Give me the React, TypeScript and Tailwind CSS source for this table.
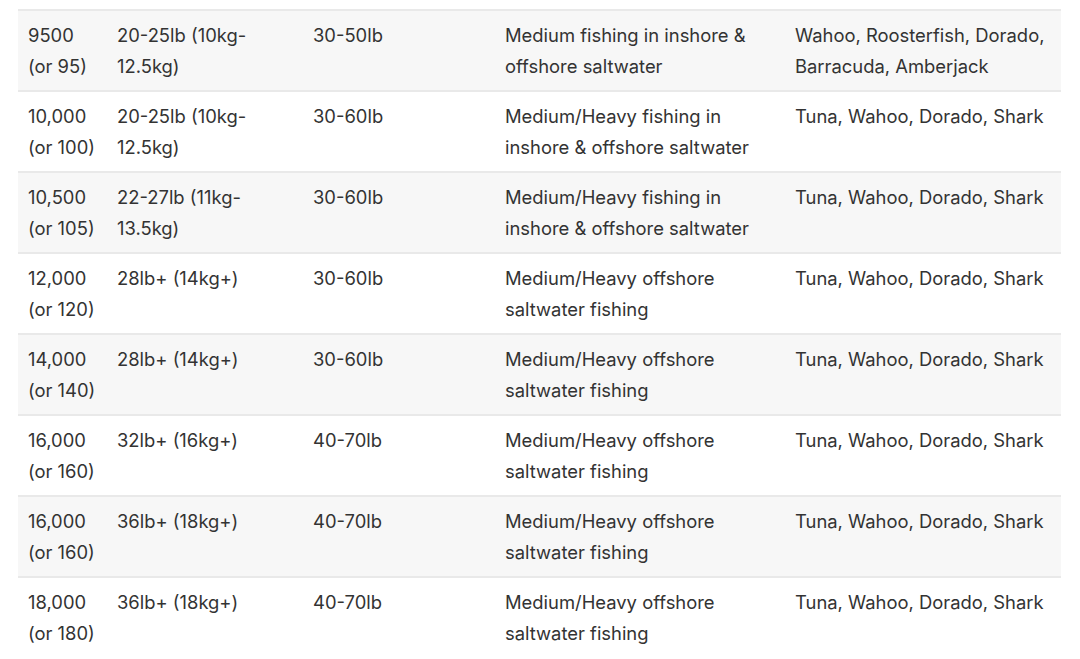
import React from 'react';

type Row = [string, string, string, string, string];

const rows: Row[] = [
  ['9500 (or 95)', '20-25lb (10kg-12.5kg)', '30-50lb', 'Medium fishing in inshore & offshore saltwater', 'Wahoo, Roosterfish, Dorado, Barracuda, Amberjack'],
  ['10,000 (or 100)', '20-25lb (10kg-12.5kg)', '30-60lb', 'Medium/Heavy fishing in inshore & offshore saltwater', 'Tuna, Wahoo, Dorado, Shark'],
  ['10,500 (or 105)', '22-27lb (11kg-13.5kg)', '30-60lb', 'Medium/Heavy fishing in inshore & offshore saltwater', 'Tuna, Wahoo, Dorado, Shark'],
  ['12,000 (or 120)', '28lb+ (14kg+)', '30-60lb', 'Medium/Heavy offshore saltwater fishing', 'Tuna, Wahoo, Dorado, Shark'],
  ['14,000 (or 140)', '28lb+ (14kg+)', '30-60lb', 'Medium/Heavy offshore saltwater fishing', 'Tuna, Wahoo, Dorado, Shark'],
  ['16,000 (or 160)', '32lb+ (16kg+)', '40-70lb', 'Medium/Heavy offshore saltwater fishing', 'Tuna, Wahoo, Dorado, Shark'],
  ['16,000 (or 160)', '36lb+ (18kg+)', '40-70lb', 'Medium/Heavy offshore saltwater fishing', 'Tuna, Wahoo, Dorado, Shark'],
  ['18,000 (or 180)', '36lb+ (18kg+)', '40-70lb', 'Medium/Heavy offshore saltwater fishing', 'Tuna, Wahoo, Dorado, Shark'],
];

const widths = ['w-[89px]', 'w-[196px]', 'w-[192px]', 'w-[290px]', 'w-[276px]'];

export default function App() {
  return (
    <div className="w-[1080px] h-[659px] overflow-hidden bg-white pt-[9px] pl-[18px]" style={{ fontFamily: 'Inter, "Noto Sans", sans-serif' }}>
      <table className="w-[1043px] table-fixed border-collapse text-[18.4px] leading-[31px] text-[#333333]">
        <tbody>
          {rows.map((r, i) => (
            <tr key={i} className={`border-t-2 border-[#e9e9e9] ${i % 2 === 0 ? 'bg-[#f7f7f7]' : 'bg-white'}`}>
              {r.map((c, j) => (
                <td key={j} className={`${widths[j]} align-top pl-[10px] pr-[4px] pt-[9px] pb-[8px]`}>
                  {c}
                </td>
              ))}
            </tr>
          ))}
        </tbody>
      </table>
    </div>
  );
}
